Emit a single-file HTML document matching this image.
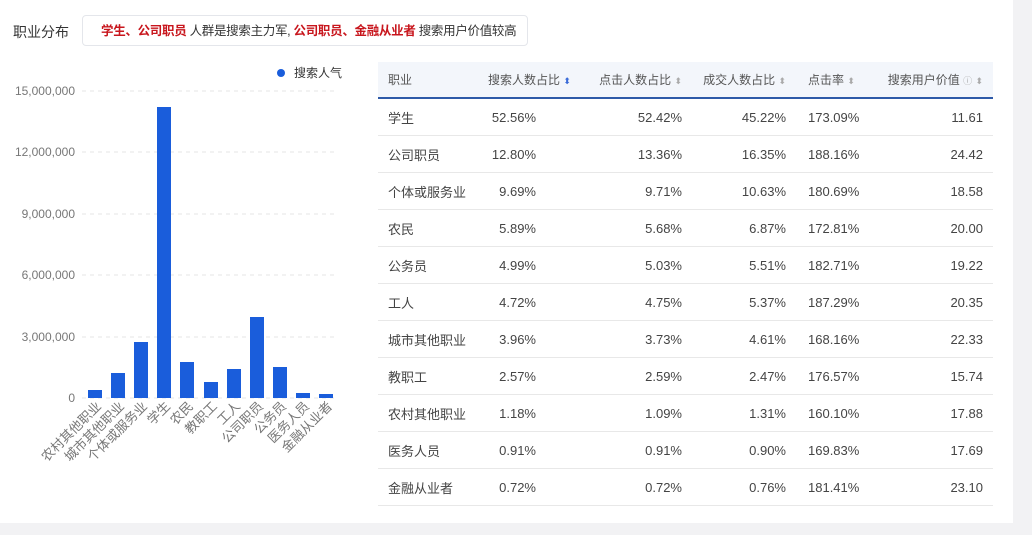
<!DOCTYPE html>
<html><head><meta charset="utf-8"><style>
body{margin:0;width:1032px;height:535px;background:#fff;font-family:"Liberation Sans","Noto Sans CJK SC",sans-serif;position:relative;overflow:hidden;color:#333}
.side{position:absolute;left:1013px;top:0;width:19px;height:535px;background:#f2f2f4}
.bot{position:absolute;left:0;top:523px;width:1032px;height:12px;background:#f2f2f4}
.title{position:absolute;left:13px;top:22px;font-size:14px;color:#333}
.tip{position:absolute;left:82px;top:15px;width:446px;height:31px;border:1px solid #e4e6eb;border-radius:4px;font-size:12.5px;line-height:30px;box-sizing:border-box;padding-left:18px;color:#333;white-space:nowrap;letter-spacing:-0.3px}
.tip b{color:#c8161d;font-weight:bold}
table{position:absolute;left:378px;top:62px;width:615px;border-collapse:collapse;font-size:13px;table-layout:fixed}
th{height:35px;background:#f3f6fb;font-weight:normal;color:#555;border-bottom:2px solid #2e5aa8;text-align:right;padding:0 10px;font-size:12px;white-space:nowrap}
td{height:36px;border-bottom:1px solid #e8e8e8;text-align:right;padding:0 10px;color:#444;white-space:nowrap}
th:first-child,td:first-child{text-align:left}
td:nth-child(5),th:nth-child(5){text-align:left;padding-left:12px}
.s{color:#aaa;font-size:9px}
</style></head><body>
<div class="side"></div><div class="bot"></div>
<div class="title">职业分布</div>
<div class="tip"><b>学生、公司职员</b> 人群是搜索主力军, <b>公司职员、金融从业者</b> 搜索用户价值较高</div>
<svg style="position:absolute;left:0;top:0" width="370" height="520" font-family="Liberation Sans,Noto Sans CJK SC,sans-serif">
<circle cx="281" cy="73" r="4" fill="#1a5ddb"/>
<text x="294" y="77" font-size="12" fill="#333">搜索人气</text>
<g stroke="#e6e6e6" stroke-dasharray="4,4">
<line x1="82" x2="335" y1="91" y2="91"/><line x1="82" x2="335" y1="152" y2="152"/><line x1="82" x2="335" y1="214" y2="214"/><line x1="82" x2="335" y1="275" y2="275"/><line x1="82" x2="335" y1="337" y2="337"/><line x1="82" x2="335" y1="398" y2="398"/></g>
<g font-size="12" fill="#777" text-anchor="end">
<text x="75" y="95">15,000,000</text><text x="75" y="156">12,000,000</text><text x="75" y="218">9,000,000</text><text x="75" y="279">6,000,000</text><text x="75" y="341">3,000,000</text><text x="75" y="402">0</text></g>
<g fill="#1a5ddb">
<rect x="88" y="390" width="14" height="8"/><rect x="111" y="373" width="14" height="25"/><rect x="134" y="342" width="14" height="56"/><rect x="157" y="107" width="14" height="291"/><rect x="180" y="362" width="14" height="36"/><rect x="204" y="382" width="14" height="16"/><rect x="227" y="369" width="14" height="29"/><rect x="250" y="317" width="14" height="81"/><rect x="273" y="367" width="14" height="31"/><rect x="296" y="393" width="14" height="5"/><rect x="319" y="394" width="14" height="4"/></g>
<g font-size="13" fill="#777" text-anchor="end">
<text transform="translate(102,407) rotate(-45)">农村其他职业</text>
<text transform="translate(125,407) rotate(-45)">城市其他职业</text>
<text transform="translate(148,407) rotate(-45)">个体或服务业</text>
<text transform="translate(171,407) rotate(-45)">学生</text>
<text transform="translate(194,407) rotate(-45)">农民</text>
<text transform="translate(218,407) rotate(-45)">教职工</text>
<text transform="translate(241,407) rotate(-45)">工人</text>
<text transform="translate(264,407) rotate(-45)">公司职员</text>
<text transform="translate(287,407) rotate(-45)">公务员</text>
<text transform="translate(310,407) rotate(-45)">医务人员</text>
<text transform="translate(333,407) rotate(-45)">金融从业者</text></g>
</svg>
<table>
<colgroup><col style="width:100px"><col style="width:68px"><col style="width:146px"><col style="width:104px"><col style="width:74px"><col style="width:123px"></colgroup>
<tr><th>职业</th><th>搜索人数占比 <span class="s" style="color:#3a6bd8">⬍</span></th><th>点击人数占比 <span class="s">⬍</span></th><th>成交人数占比 <span class="s">⬍</span></th><th>点击率 <span class="s">⬍</span></th><th>搜索用户价值 <span class="s">ⓘ</span> <span class="s">⬍</span></th></tr>
<tr><td>学生</td><td>52.56%</td><td>52.42%</td><td>45.22%</td><td>173.09%</td><td>11.61</td></tr>
<tr><td>公司职员</td><td>12.80%</td><td>13.36%</td><td>16.35%</td><td>188.16%</td><td>24.42</td></tr>
<tr><td>个体或服务业</td><td>9.69%</td><td>9.71%</td><td>10.63%</td><td>180.69%</td><td>18.58</td></tr>
<tr><td>农民</td><td>5.89%</td><td>5.68%</td><td>6.87%</td><td>172.81%</td><td>20.00</td></tr>
<tr><td>公务员</td><td>4.99%</td><td>5.03%</td><td>5.51%</td><td>182.71%</td><td>19.22</td></tr>
<tr><td>工人</td><td>4.72%</td><td>4.75%</td><td>5.37%</td><td>187.29%</td><td>20.35</td></tr>
<tr><td>城市其他职业</td><td>3.96%</td><td>3.73%</td><td>4.61%</td><td>168.16%</td><td>22.33</td></tr>
<tr><td>教职工</td><td>2.57%</td><td>2.59%</td><td>2.47%</td><td>176.57%</td><td>15.74</td></tr>
<tr><td>农村其他职业</td><td>1.18%</td><td>1.09%</td><td>1.31%</td><td>160.10%</td><td>17.88</td></tr>
<tr><td>医务人员</td><td>0.91%</td><td>0.91%</td><td>0.90%</td><td>169.83%</td><td>17.69</td></tr>
<tr><td>金融从业者</td><td>0.72%</td><td>0.72%</td><td>0.76%</td><td>181.41%</td><td>23.10</td></tr>
</table>
</body></html>
